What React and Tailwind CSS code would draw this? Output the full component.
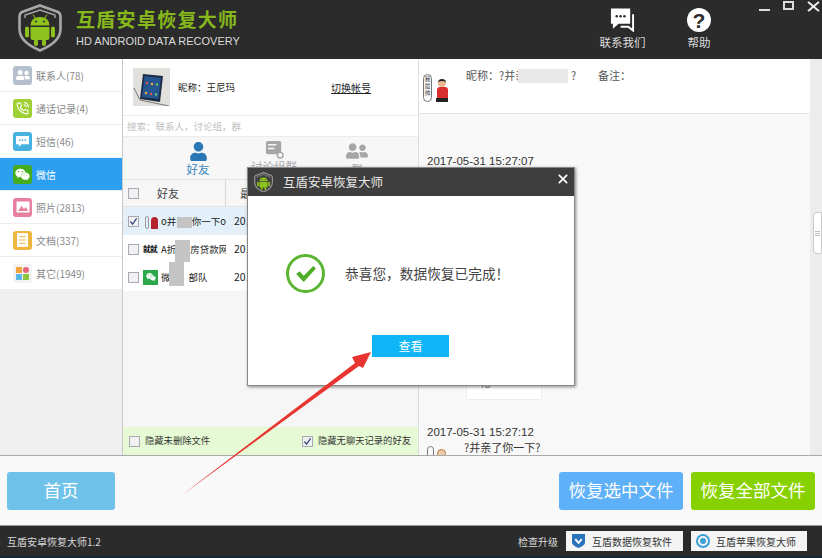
import React from 'react';
import { FaUser, FaUserFriends, FaWeixin } from 'react-icons/fa';
import { FiPhoneCall } from 'react-icons/fi';

const sideItems = [
  { label: '联系人(78)', bg: 'bg-[#b4c0cb]', icon: <FaUserFriends size={14} className="text-white" /> },
  { label: '通话记录(4)', bg: 'bg-[#9fd134]', icon: <FiPhoneCall size={13} className="text-white" /> },
  {
    label: '短信(46)',
    bg: 'bg-[#47b1e0]',
    icon: (
      <svg viewBox="0 0 16 14" className="w-[15px] h-[13px]">
        <path d="M1 1 H15 V10 H7 L4 13 V10 H1 Z" fill="#fff" />
        <circle cx="5" cy="5.5" r="1" fill="#47b1e0" />
        <circle cx="8" cy="5.5" r="1" fill="#47b1e0" />
        <circle cx="11" cy="5.5" r="1" fill="#47b1e0" />
      </svg>
    ),
  },
  { label: '微信', bg: 'bg-[#44ac1e]', icon: <FaWeixin size={15} className="text-white" />, active: true },
  {
    label: '照片(2813)',
    bg: 'bg-[#e77f9f]',
    icon: (
      <svg viewBox="0 0 14 12" className="w-[14px] h-[12px]">
        <rect x="0.5" y="0.5" width="13" height="11" fill="#fff" />
        <path d="M2 10 L5.5 5 L8 8 L10 6 L12 10 Z" fill="#e77f9f" />
      </svg>
    ),
  },
  {
    label: '文档(337)',
    bg: 'bg-[#eeb63c]',
    icon: (
      <svg viewBox="0 0 12 15" className="w-[11px] h-[14px]">
        <rect width="12" height="15" fill="#fff" />
        <path d="M2.5 4 H9.5 M2.5 7.5 H9.5 M2.5 11 H9.5" stroke="#eeb63c" strokeWidth="1.2" />
      </svg>
    ),
  },
  { label: '其它(1949)', bg: 'bg-[#f3f3f3]', other: true },
];

const Shield = ({ size, stroke }) => (
  <svg viewBox="0 0 44 48" fill="none" className="shrink-0" style={{ width: size, height: size * 1.09 }}>
    <path d="M22 1.5 L40 8 Q42.5 9 42.5 13 V25 Q42.5 38 22 46.5 Q1.5 38 1.5 25 V13 Q1.5 9 4 8 Z" stroke={stroke} strokeWidth="2.6" />
    <path d="M7 14 V11 L22 6 L37 11 V14" stroke={stroke} strokeWidth="1.4" />
    {/* android */}
    <path d="M15 10.5 L17 14 M29 10.5 L27 14" stroke="#8ec31f" strokeWidth="1" />
    <path d="M12.5 21.5 Q13 13 22 13 Q31 13 31.5 21.5 Z" fill="#8ec31f" />
    <circle cx="18" cy="17.5" r="1" fill="#2b2b2b" />
    <circle cx="26" cy="17.5" r="1" fill="#2b2b2b" />
    <path d="M12.5 23 H31.5 V34 Q31.5 36 29 36 H15 Q12.5 36 12.5 34 Z" fill="#8ec31f" />
    <rect x="7" y="22.5" width="4" height="11" rx="2" fill="#8ec31f" />
    <rect x="33" y="22.5" width="4" height="11" rx="2" fill="#8ec31f" />
    <rect x="16" y="35" width="4" height="7" rx="2" fill="#8ec31f" />
    <rect x="24" y="35" width="4" height="7" rx="2" fill="#8ec31f" />
  </svg>
);

const Checkbox = ({ checked }) => (
  <span className="w-[11px] h-[11px] shrink-0 border border-[#a9a9b5] bg-[#f1f1f1] flex items-center justify-center">
    {checked && (
      <svg viewBox="0 0 10 10" className="w-[9px] h-[9px]" fill="none">
        <path d="M1.5 5 L4 8 L8.5 1.5" stroke="#3a4a80" strokeWidth="1.4" />
      </svg>
    )}
  </span>
);

const friendRows = [
  {
    name: 'o并亲',
    tail: '你一下o',
    tailGap: 'ml-[3px]',
    active: true,
    avatar: (
      <span className="w-[15px] h-[15px] shrink-0 flex items-end justify-end gap-[2px]">
        <span className="w-[4px] h-[13px] rounded-full border border-[#999]" />
        <span className="w-[7px] h-[12px] rounded-t bg-[#b3232d]" />
      </span>
    ),
    blur: 'left-[54px] top-[10px] h-[11px]',
  },
  {
    name: 'A折',
    tail: '房贷款网货',
    tailGap: 'ml-[11px]',
    avatar: <span className="w-[15px] shrink-0 text-[7.5px] leading-none font-bold text-black tracking-[-0.5px]">就就</span>,
    blur: 'left-[52px] top-[5px] h-[22px]',
  },
  {
    name: '微',
    tail: '部队',
    tailGap: 'ml-[15px]',
    avatar: <span className="w-[15px] h-[15px] shrink-0 bg-[#2aa84a] flex items-center justify-center"><FaWeixin size={10} className="text-white" /></span>,
    blur: 'left-[46px] -top-[1px] h-[24px]',
  },
];

export default function App() {
  return (
    <div className="relative w-[822px] h-[558px] overflow-hidden flex flex-col bg-white font-['Noto_Sans_CJK_SC','Liberation_Sans',sans-serif] text-[11px]">
      {/* top bar */}
      <div className="h-[59px] shrink-0 bg-[#2b2b2b] flex relative">
        <div className="ml-[18px] mt-[4px]">
          <Shield size={44} stroke="#a8a8a8" />
        </div>
        <div className="ml-[14px] pt-[7px]">
          <div className="text-[#86b81b] text-[19px] leading-[24px] font-bold tracking-[1.3px] whitespace-nowrap">互盾安卓恢复大师</div>
          <div className="text-[#dcdcdc] text-[11px] leading-[16px] mt-[2px] font-['Liberation_Sans',sans-serif] whitespace-nowrap">HD ANDROID DATA RECOVERY</div>
        </div>
        <div className="ml-auto flex pt-[8px] mr-[111px] gap-[41px] text-[#dcdcdc] text-[11.5px]">
          <div className="flex flex-col items-center w-[47px]">
            <svg viewBox="0 0 26 24" className="w-[25px] h-[24px]">
              <path d="M1 0 H21 V16 H9 L3 21 V16 H1 Z" fill="#fff" />
              <circle cx="7" cy="8" r="1.3" fill="#2b2b2b" />
              <circle cx="11" cy="8" r="1.3" fill="#2b2b2b" />
              <circle cx="15" cy="8" r="1.3" fill="#2b2b2b" />
              <path d="M24 6 V23 L19 19 H11" fill="none" stroke="#fff" strokeWidth="2" />
            </svg>
            <span className="mt-[2px] leading-[17px] whitespace-nowrap">联系我们</span>
          </div>
          <div className="flex flex-col items-center w-[24px]">
            <div className="w-[24px] h-[24px] rounded-full bg-white flex items-center justify-center text-[#2b2b2b] text-[21px] font-bold leading-none font-['Liberation_Sans',sans-serif]">?</div>
            <span className="mt-[2px] leading-[17px] whitespace-nowrap">帮助</span>
          </div>
        </div>
        <div className="absolute right-[2px] top-0 flex items-start gap-[13px]">
          <span className="w-[11px] h-[2px] bg-[#ddd] mt-[9px]" />
          <span className="w-[11px] h-[9px] border-2 border-[#ddd] mt-[1px]" />
          <svg viewBox="0 0 12 12" className="w-[13px] h-[11px] mt-[1px]" stroke="#eee" strokeWidth="2" preserveAspectRatio="none">
            <path d="M1 1 L11 11 M11 1 L1 11" />
          </svg>
        </div>
      </div>

      {/* main */}
      <div className="h-[397px] shrink-0 flex border-b border-[#aaa]">
        {/* sidebar */}
        <div className="w-[123px] shrink-0 bg-[#efefef] border-r border-[#c8c8c8]">
          {sideItems.map((item) => (
            <div
              key={item.label}
              className={`h-[33px] flex items-center pl-[13px] gap-[4px] border-b border-[#eee] text-[10px] ${item.active ? 'bg-[#2d9ff0] text-white' : 'bg-white text-[#888]'}`}
            >
              <span className={`w-[19px] h-[19px] rounded-[3px] flex items-center justify-center shrink-0 ${item.bg}`}>
                {item.other ? (
                  <span className="grid grid-cols-2 gap-[1px]">
                    <span className="w-[6px] h-[6px] bg-[#f5a33c]" />
                    <span className="w-[6px] h-[6px] rounded-full bg-[#e8667a]" />
                    <span className="w-[6px] h-[6px] bg-[#5bb7e5]" />
                    <span className="w-[6px] h-[6px] bg-[#8cc63f]" />
                  </span>
                ) : item.icon}
              </span>
              <span className="whitespace-nowrap">{item.label}</span>
            </div>
          ))}
        </div>

        {/* contact panel */}
        <div className="w-[296px] shrink-0 flex flex-col bg-[#f6f6f6] border-r border-[#ddd]">
          <div className="h-[56px] shrink-0 bg-white flex items-center pl-[10px] text-[#222]">
            <div className="w-[37px] h-[38px] bg-[#e2e0dc] shrink-0">
              <svg viewBox="0 0 37 38" className="w-[37px] h-[38px]">
                <path d="M10 6 L30 8 L27 34 L7 31 Z" fill="#1c2a44" />
                <path d="M11.5 8 L28 10 L25.5 31 L9 29 Z" fill="#25568f" />
                <circle cx="14" cy="15" r="1.2" fill="#e5574f" />
                <circle cx="19" cy="16" r="1.2" fill="#f2b33d" />
                <circle cx="24" cy="16.5" r="1.2" fill="#6fc66b" />
                <circle cx="13" cy="25" r="1.2" fill="#f2b33d" />
                <circle cx="18" cy="26" r="1.2" fill="#e5574f" />
                <circle cx="23" cy="26.5" r="1.2" fill="#6fc66b" />
                <path d="M1 20 L7 32 L36 38" stroke="#333" fill="none" strokeWidth="0.6" />
              </svg>
            </div>
            <span className="ml-[8px] text-[9.5px] whitespace-nowrap">昵称：王尼玛</span>
            <span className="ml-[96px] text-[10px] underline whitespace-nowrap">切换帐号</span>
          </div>
          <div className="h-[22px] shrink-0 bg-white border-y border-[#ececec] pl-[4px] flex items-center text-[9.5px] text-[#c0c0c0] whitespace-nowrap">
            搜索：联系人，讨论组，群
          </div>
          <div className="h-[42px] shrink-0 flex bg-[#f7f7f7]">
            <div className="ml-[51px] w-[48px] flex flex-col items-center pt-[5px] text-[#3c87bd]">
              <FaUser size={19} className="text-[#2a77b5]" />
              <span className="text-[11.5px] leading-[15px] mt-[1px]">好友</span>
            </div>
            <div className="ml-[28px] w-[48px] flex flex-col items-center pt-[3px] text-[#aaa]">
              <svg viewBox="0 0 20 20" className="w-[19px] h-[19px] shrink-0" fill="#a6a6a6">
                <rect x="1" y="1" width="16" height="14" rx="2" />
                <circle cx="16" cy="16" r="3" fill="#f7f7f7" stroke="#a6a6a6" strokeWidth="1.5" />
                <path d="M3 5 H12 M3 9 H10" stroke="#f7f7f7" strokeWidth="1.5" />
              </svg>
              <span className="text-[11.5px] leading-[15px] whitespace-nowrap">讨论组群</span>
            </div>
            <div className="ml-[35px] w-[48px] flex flex-col items-center pt-[3px] text-[#aaa]">
              <FaUserFriends size={22} className="text-[#a6a6a6]" />
              <span className="text-[11.5px] leading-[15px]">群</span>
            </div>
          </div>
          <div className="h-[28px] shrink-0 flex items-center bg-[#f6f6f6] border-y border-[#e4e4e4] text-[#444]">
            <span className="pl-[5px] w-[34px]"><Checkbox /></span>
            <span className="w-[69px] whitespace-nowrap border-r border-[#d8d8d8] leading-[28px]">好友</span>
            <span className="pl-[14px] whitespace-nowrap">最后聊天</span>
          </div>
          {friendRows.map((row) => (
            <div key={row.tail} className={`relative h-[28px] shrink-0 flex items-center text-[9.5px] text-[#222] whitespace-nowrap ${row.active ? 'bg-[#e3f0fa]' : 'bg-white'}`}>
              <span className="pl-[5px] w-[20px] shrink-0"><Checkbox checked={row.active} /></span>
              <span className="w-[83px] shrink-0 flex items-center gap-[3px] overflow-hidden">
                {row.avatar}
                <span className="shrink-0">{row.name}</span>
                <span className={`shrink-0 ${row.tailGap}`}>{row.tail}</span>
              </span>
              <span className="pl-[8px] text-[10.5px]">2017-05-31</span>
              <span className={`absolute w-[15px] bg-[#c4c4c4] ${row.blur}`} />
            </div>
          ))}
          <div className="flex-1" />
          <div className="h-[28px] shrink-0 bg-[#e6fbd5] flex items-center justify-between px-[6px] text-[9.3px] text-[#333] whitespace-nowrap">
            <span className="flex items-center gap-[5px]"><Checkbox />隐藏未删除文件</span>
            <span className="flex items-center gap-[5px] mr-[1px]"><Checkbox checked />隐藏无聊天记录的好友</span>
          </div>
        </div>

        {/* chat panel */}
        <div className="flex-1 flex flex-col bg-[#f8f8f8] overflow-hidden">
          <div className="h-[55px] shrink-0 bg-white border-b border-[#e4e4e4] flex pl-[4px] text-[11px] text-[#555]">
            <div className="mt-[13px] w-[29px] h-[30px] flex items-end gap-[4px]">
              <span className="w-[9px] h-[28px] rounded-full border border-[#777] text-[6px] leading-[7px] text-center text-[#333]">我最帅</span>
              <span className="w-[12px] flex flex-col items-center">
                <span className="w-[8px] h-[8px] rounded-full bg-[#e9b88f] border-t-2 border-[#222]" />
                <span className="w-[11px] h-[11px] rounded-t-[3px] bg-[#d92e2e]" />
                <span className="w-[12px] h-[4px] bg-[#222]" />
              </span>
            </div>
            <div className="relative ml-[14px] mt-[8px] w-[132px] whitespace-nowrap leading-[17px]">
              昵称：?并亲
              <span className="absolute left-[52px] top-[2px] w-[50px] h-[14px] bg-[#e8e8e8]" />
              <span className="absolute left-[105px] top-0">?</span>
            </div>
            <span className="mt-[8px] leading-[17px] whitespace-nowrap">备注：</span>
          </div>
          <div className="flex-1 relative flex flex-col pl-[8px] text-[#333] font-['Liberation_Sans','Noto_Sans_CJK_SC',sans-serif] text-[11.5px] overflow-hidden">
            <div className="mt-[39px] leading-[16px]">2017-05-31 15:27:07</div>
            <div className="ml-[39px] mt-[4px] w-[76px] h-[227px] bg-white border border-[#eee] flex items-end pl-[11px] pb-[9px] leading-[12px] text-[#777] shrink-0">45</div>
            <div className="mt-[24px] leading-[16px]">2017-05-31 15:27:12</div>
            <div className="flex">
              <span className="mt-[6px] flex gap-[3px] w-[37px]">
                <span className="w-[7px] h-[14px] rounded-full border border-[#777]" />
                <span className="w-[9px] h-[9px] mt-[3px] rounded-full bg-[#eccaa8] border border-[#b5793f]" />
              </span>
              <span className="leading-[15px] font-['Noto_Sans_CJK_SC',sans-serif] text-[11px] whitespace-nowrap">?并亲了你一下?</span>
            </div>
          </div>
        </div>

        {/* scrollbar */}
        <div className="w-[12px] shrink-0 bg-[#ececec] pl-[3px]">
          <div className="mt-[153px] h-[42px] bg-white border border-[#ccc] rounded-l-[4px] flex flex-col justify-center gap-[1px] px-[1px]">
            <span className="h-px bg-[#bbb]" />
            <span className="h-px bg-[#bbb]" />
            <span className="h-px bg-[#bbb]" />
          </div>
        </div>
      </div>

      {/* action row */}
      <div className="h-[70px] shrink-0 bg-[#f9f9f9] border-b border-[#999] flex items-center px-[7px] text-white text-[17.5px]">
        <button className="w-[108px] h-[38px] rounded-[3px] bg-[#6ec2ea]">首页</button>
        <button className="ml-auto w-[124px] h-[38px] rounded-[3px] bg-[#5eb1f8] whitespace-nowrap">恢复选中文件</button>
        <button className="ml-[8px] w-[124px] h-[38px] rounded-[3px] bg-[#88d100] whitespace-nowrap">恢复全部文件</button>
      </div>

      {/* status bar */}
      <div className="flex-1 bg-[#2b2b2b] border-b-2 border-[#12293a] flex items-center pl-[7px] pr-[15px] text-[#d8d8d8] text-[10px] whitespace-nowrap">
        <span>互盾安卓恢复大师1.2</span>
        <span className="ml-auto">检查升级</span>
        <button className="ml-[8px] w-[117px] h-[20px] bg-[#f4f4f4] flex items-center pl-[6px] gap-[7px] text-[#333]">
          <svg viewBox="0 0 14 15" className="w-[13px] h-[14px] shrink-0">
            <path d="M0 0 H14 V9 Q14 12 7 15 Q0 12 0 9 Z" fill="#2a73b8" />
            <path d="M3.5 5.5 L7 9.5 L10.5 5.5" stroke="#fff" strokeWidth="2" fill="none" />
          </svg>
          互盾数据恢复软件
        </button>
        <button className="ml-[8px] w-[116px] h-[20px] bg-[#f4f4f4] flex items-center pl-[5px] gap-[6px] text-[#333]">
          <span className="w-[14px] h-[14px] rounded-full border-2 border-[#3b9ed6] flex items-center justify-center"><span className="w-[6px] h-[6px] rounded-full bg-[#3b9ed6]" /></span>
          互盾苹果恢复大师
        </button>
      </div>

      {/* dialog */}
      <div className="absolute left-[247px] top-[167px] w-[328px] h-[219px] bg-white border border-[#888] shadow-[1px_1px_3px_rgba(0,0,0,0.45)] flex flex-col">
        <div className="h-[28px] shrink-0 bg-[#3e3e3e] flex items-center pl-[6px] text-[#e8e8e8] text-[12.5px]">
          <Shield size={19} stroke="#9a9a9a" />
          <span className="ml-[10px] whitespace-nowrap">互盾安卓恢复大师</span>
          <svg viewBox="0 0 12 12" className="w-[10px] h-[10px] ml-auto mr-[6px] -mt-[6px]" stroke="#fff" strokeWidth="2">
            <path d="M1 1 L11 11 M11 1 L1 11" />
          </svg>
        </div>
        <div className="flex items-center pl-[38px] pt-[58px]">
          <span className="w-[39px] h-[39px] rounded-full border-[3px] border-[#5cb531] flex items-center justify-center shrink-0">
            <svg viewBox="0 0 24 20" className="w-[22px] h-[18px]">
              <path d="M1 10 L5 7 L9.5 12 L20 1 L23 4 L9.5 19 Z" fill="#4eae2a" />
            </svg>
          </span>
          <span className="ml-[20px] text-[13.7px] text-[#444] whitespace-nowrap">恭喜您，数据恢复已完成！</span>
        </div>
        <button className="mt-[42px] ml-[124px] w-[77px] h-[22px] bg-[#0fb5f6] text-white text-[12px]">查看</button>
      </div>

      {/* annotation arrow */}
      <svg viewBox="0 0 822 558" className="absolute inset-0 w-[822px] h-[558px] pointer-events-none">
        <path d="M182 495 L355 363 L352 357 L371 352 L363 368 L359 366 Z" fill="#e8352f" />
      </svg>
    </div>
  );
}
